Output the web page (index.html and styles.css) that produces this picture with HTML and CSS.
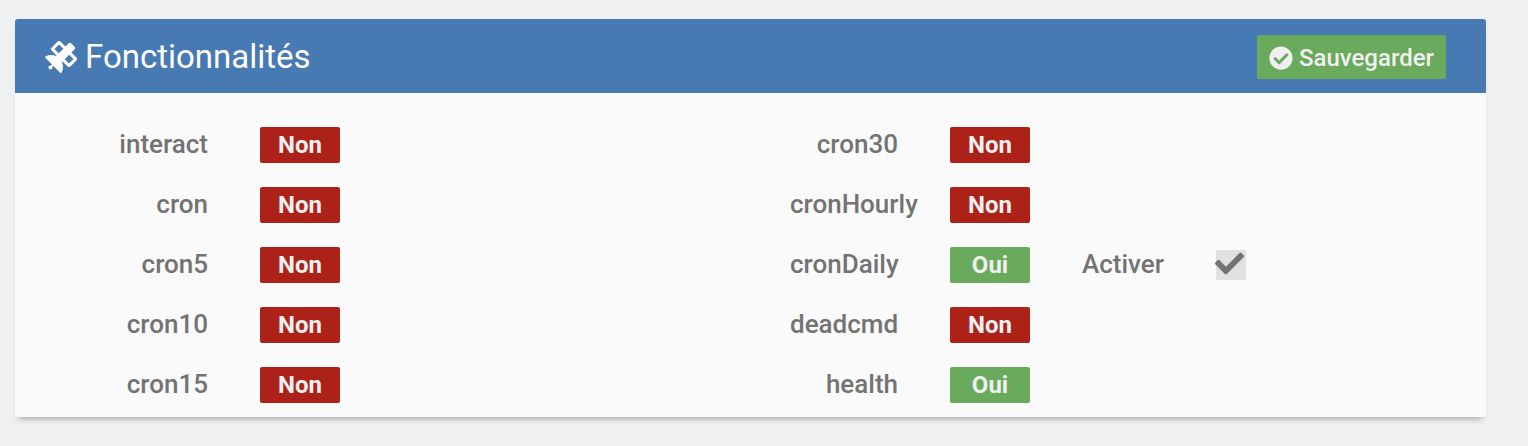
FILE: index.html
```html
<!DOCTYPE html>
<html lang="fr">
  <head>
    <meta charset="UTF-8" />
    <meta name="viewport" content="width=device-width, initial-scale=1.0" />
    <title>Fonctionnalités</title>
    <link rel="stylesheet" href="styles.css">
  </head>
  <body>
    <form class="panel">
      <!-- En-tête du panneau -->
      <div class="panel-heading">
        <h3 class="panel-title">
          <svg class="icon-title" viewBox="0 0 512 512" aria-hidden="true"><path d="M502.6 310.04l-96.7 96.72a31.88 31.88 0 0 1-45 0L280.57 326.34l-9.89 9.91a190.56 190.56 0 0 1-5.41 168.52c-4.5 8.5-16.39 9.6-23.2 2.8L134.55 400.05l-17.8 17.8c.7 2.61 1.61 5 1.61 7.8a32 32 0 1 1-32-32c2.8 0 5.19.9 7.8 1.6l17.8-17.8L4.43 269.94c-6.8-6.81-5.7-18.61 2.8-23.2a190.58 190.58 0 0 1 168.53-5.41l9.8-9.8-80.31-80.42a32 32 0 0 1 0-45.1L201.96 9.3A31.63 31.63 0 0 1 224.47 0a32 32 0 0 1 22.6 9.3l80.32 80.3 47.8-47.9a33.6 33.6 0 0 1 47.51 0l47.51 47.5a33.63 33.63 0 0 1 0 47.5l-47.8 47.9 80.31 80.43a31.79 31.79 0 0 1-.11 45.01zM219.56 197.43l73.83-73.82-68.92-68.9-73.81 73.81zm237.75 90.11l-68.9-68.92-73.83 73.82 68.92 68.9z"/></svg>
          Fonctionnalités
        </h3>
        <button type="button" class="btn-save">
          <svg class="icon-save" viewBox="0 0 512 512" aria-hidden="true"><path d="M504 256c0 136.967-111.033 248-248 248S8 392.967 8 256 119.033 8 256 8s248 111.033 248 248zM227.314 387.314l184-184c6.248-6.248 6.248-16.379 0-22.627l-22.627-22.627c-6.248-6.249-16.379-6.249-22.628 0L216 308.118l-70.059-70.059c-6.248-6.248-16.379-6.248-22.628 0l-22.627 22.627c-6.248 6.248-6.248 16.379 0 22.627l104 104c6.249 6.249 16.379 6.249 22.628.001z"/></svg>
          Sauvegarder
        </button>
      </div>

      <!-- Liste des fonctionnalités -->
      <div class="panel-body">
        <div class="column">
          <div class="row">
            <span class="name">interact</span>
            <span class="label label-danger">Non</span>
          </div>
          <div class="row">
            <span class="name">cron</span>
            <span class="label label-danger">Non</span>
          </div>
          <div class="row">
            <span class="name">cron5</span>
            <span class="label label-danger">Non</span>
          </div>
          <div class="row">
            <span class="name">cron10</span>
            <span class="label label-danger">Non</span>
          </div>
          <div class="row">
            <span class="name">cron15</span>
            <span class="label label-danger">Non</span>
          </div>
        </div>

        <div class="column">
          <div class="row">
            <span class="name">cron30</span>
            <span class="label label-danger">Non</span>
          </div>
          <div class="row">
            <span class="name">cronHourly</span>
            <span class="label label-danger">Non</span>
          </div>
          <div class="row">
            <span class="name">cronDaily</span>
            <span class="label label-success">Oui</span>
            <label class="option" for="cronDailyActive">Activer</label>
            <span class="checkbox">
              <input type="checkbox" id="cronDailyActive" checked />
              <svg class="icon-check" viewBox="0 0 512 512" aria-hidden="true"><path d="M173.898 439.404l-166.4-166.4c-9.997-9.997-9.997-26.206 0-36.204l36.203-36.204c9.997-9.998 26.207-9.998 36.204 0L192 312.69 432.095 72.596c9.997-9.997 26.207-9.997 36.204 0l36.203 36.204c9.997 9.997 9.997 26.206 0 36.204l-294.4 294.401c-9.998 9.997-26.207 9.997-36.204-.001z"/></svg>
            </span>
          </div>
          <div class="row">
            <span class="name">deadcmd</span>
            <span class="label label-danger">Non</span>
          </div>
          <div class="row">
            <span class="name">health</span>
            <span class="label label-success">Oui</span>
          </div>
        </div>
      </div>
    </form>
  </body>
</html>
```

FILE: styles.css
```css
* {
  box-sizing: border-box;
}

body {
  margin: 0;
  padding: 19px 42px 29px 15px;
  background-color: #eff0f2;
  color: #737373;
  font-family: Roboto, "Liberation Sans", sans-serif;
  font-size: 26px;
}

.panel {
  background-color: #fafafa;
  border-radius: 3px;
  box-shadow: 0 6px 6px -4px rgba(0, 0, 0, 0.3);
}

/* En-tête */
.panel-heading {
  display: flex;
  align-items: center;
  justify-content: space-between;
  padding: 16px 40px 14px 30px;
  background-color: #4779b3;
  border-radius: 3px 3px 0 0;
}

.panel-title {
  display: flex;
  align-items: center;
  gap: 8px;
  margin: 0;
  color: #fff;
  font-size: 33px;
  font-weight: 400;
  line-height: 44px;
}

.icon-title {
  width: 32px;
  height: 32px;
  fill: #fff;
}

.btn-save {
  display: flex;
  align-items: center;
  gap: 6px;
  height: 44px;
  padding: 2px 12px 0;
  border: 0;
  border-radius: 2px;
  background-color: #69aa5c;
  color: #f0f0f0;
  font-family: inherit;
  font-size: 24px;
  font-weight: 500;
  cursor: pointer;
}

.icon-save {
  width: 24px;
  height: 24px;
  fill: #f0f0f0;
}

/* Contenu sur deux colonnes */
.panel-body {
  display: grid;
  grid-template-columns: 1fr 1fr;
  padding: 22px 46px 2px 45px;
}

.column {
  padding-left: 40px;
}

.row {
  display: flex;
  align-items: center;
  gap: 52px;
  height: 60px;
  font-weight: 500;
}

.name,
.option {
  padding-bottom: 2px;
}

/* Les noms trop longs débordent à droite */
.name {
  display: flex;
  flex: none;
  justify-content: safe flex-end;
  width: 108px;
}

/* Etiquettes Oui / Non */
.label {
  flex: none;
  width: 80px;
  border-radius: 2px;
  color: #f0f0f0;
  font-size: 24px;
  font-weight: 700;
  line-height: 36px;
  text-align: center;
}

.label-danger {
  background-color: #ac2218;
}

.label-success {
  background-color: #69aa5c;
}

/* Case à cocher */
.checkbox {
  position: relative;
  width: 30px;
  height: 30px;
}

.checkbox input {
  display: block;
  width: 30px;
  height: 30px;
  margin: 0;
  appearance: none;
  background-color: #e0e1e1;
  cursor: pointer;
}

.icon-check {
  display: none;
  position: absolute;
  top: -1px;
  left: -1px;
  width: 29px;
  height: 29px;
  fill: #737373;
  pointer-events: none;
}

.checkbox input:checked + .icon-check {
  display: block;
}
```
